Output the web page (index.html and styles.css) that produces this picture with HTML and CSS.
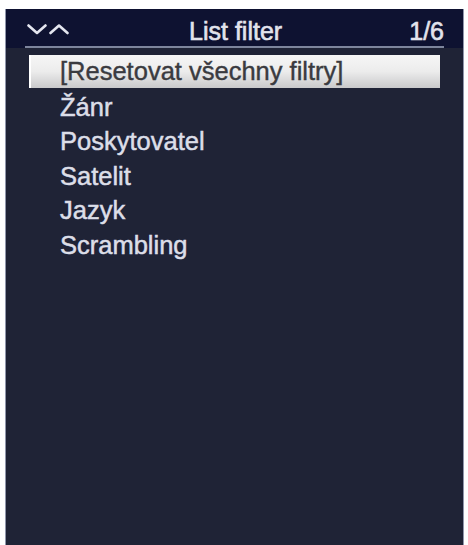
FILE: index.html
```html
<!DOCTYPE html>
<html>
<head>
<meta charset="utf-8">
<link rel="stylesheet" href="styles.css">
</head>
<body>
<div class="panel">
  <div class="header">
    <svg class="chev" width="42" height="11" viewBox="0 0 42 11">
      <polyline points="1.5,1.5 10,9 18.5,1.5" fill="none" stroke="#e4e6ef" stroke-width="2.6" stroke-linecap="round" stroke-linejoin="round"/>
      <polyline points="23.5,9 32,1.5 40.5,9" fill="none" stroke="#e4e6ef" stroke-width="2.6" stroke-linecap="round" stroke-linejoin="round"/>
    </svg>
    <div class="title">List filter</div>
    <div class="count">1/6</div>
  </div>
  <div class="rule"></div>
  <ul class="list">
    <li class="item selected">[Resetovat všechny filtry]</li>
    <li class="item">Žánr</li>
    <li class="item">Poskytovatel</li>
    <li class="item">Satelit</li>
    <li class="item">Jazyk</li>
    <li class="item">Scrambling</li>
  </ul>
</div>
</body>
</html>
```
FILE: styles.css
```css
html, body {
  margin: 0;
  padding: 0;
  background: #ffffff;
  height: 100%;
}
body {
  font-family: "Liberation Sans", Arial, sans-serif;
}
.panel {
  box-sizing: border-box;
  margin: 9px 0 0 5px;
  width: 459px;
  height: 536px;
  background: #1f2336;
  border-left: 1px solid #9096ab;
  border-right: 1px solid #9096ab;
  display: flex;
  flex-direction: column;
}
.header {
  background: #0e1231;
  padding: 7px 19px 0 21px;
  height: 30px;
  line-height: 30px;
  display: flex;
  align-items: center;
  color: #e2e3ec;
  font-size: 25px;
  -webkit-text-stroke: 0.6px #e2e3ec;
}
.chev {
  display: block;
  flex: none;
  margin-top: -3px;
}
.title {
  flex: 1;
  text-align: center;
  margin-right: 7px;
}
.count {
  flex: none;
}
.rule {
  height: 2px;
  background: #0e1231;
}
.rule::after {
  content: "";
  display: block;
  margin: 0 19px;
  height: 2px;
  background: #7d859c;
}
.list {
  list-style: none;
  margin: 7px 23px 0 23px;
  padding: 0;
}
.item {
  height: 34.5px;
  line-height: 34.5px;
  font-size: 25.5px;
  color: #dcdee8;
  -webkit-text-stroke: 0.5px #dcdee8;
  padding-left: 31px;
  white-space: nowrap;
}
.item.selected {
  height: 33px;
  line-height: 33px;
  margin-bottom: 1.5px;
  color: #3a3b40;
  -webkit-text-stroke: 0.4px #3a3b40;
  background: linear-gradient(to bottom, #f6f6f6 0%, #ececec 50%, #c9c9cb 100%);
  box-shadow: inset 2px 0 0 #ffffff;
}
```
